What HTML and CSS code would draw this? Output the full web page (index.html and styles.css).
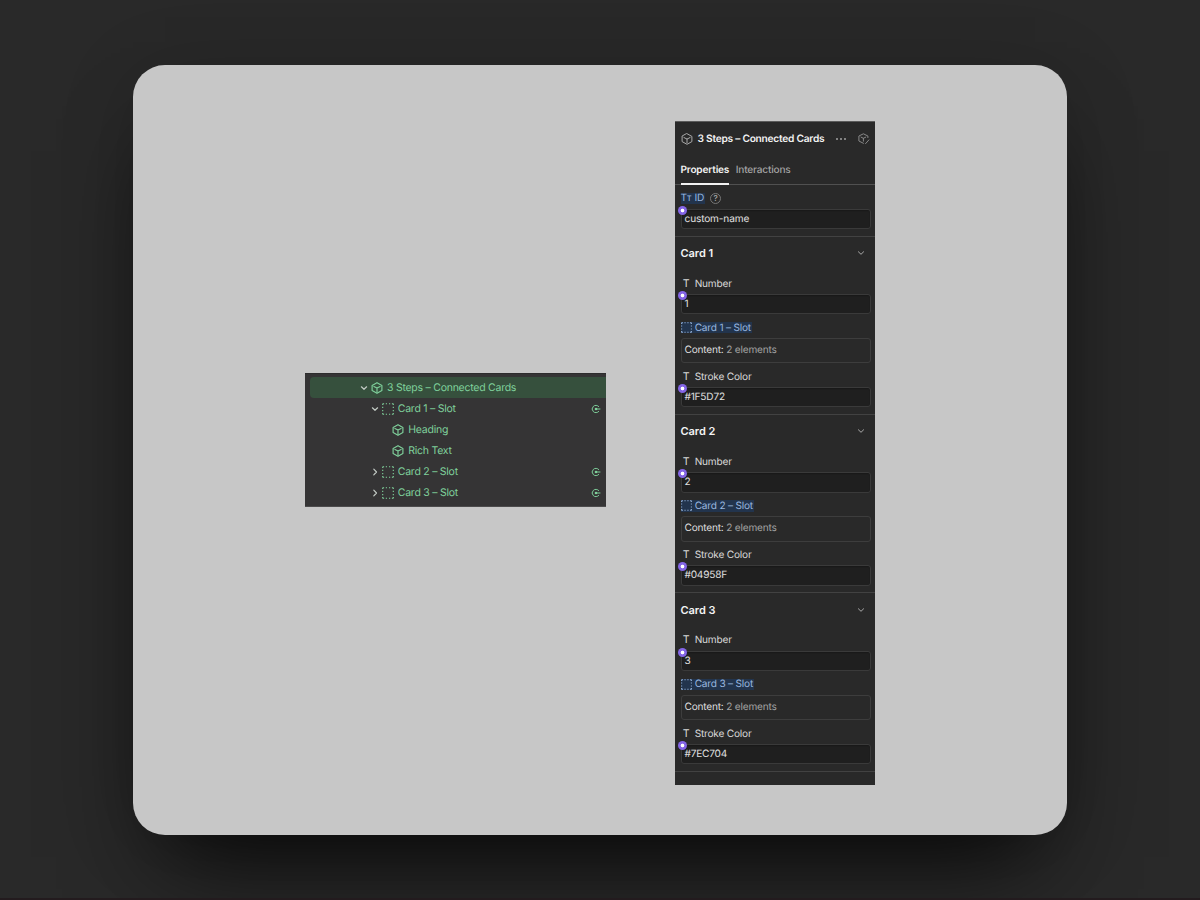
FILE: index.html
```html
<!DOCTYPE html>
<html lang="en">
<head>
<meta charset="utf-8">
<title>3 Steps – Connected Cards</title>
<link rel="stylesheet" href="styles.css">
</head>
<body>
<svg class="defs" aria-hidden="true">
  <symbol id="component" viewBox="0 0 12 12"><path d="M6 .7 10.9 3.4V8.6L6 11.3 1.1 8.6V3.4ZM2.9 4.5 6 6.1l3.1-1.6M6 6.1v3.6"/></symbol>
  <symbol id="edit" viewBox="0 0 12 12"><path d="M9.9 4.6V3L5.4.8.9 3V8l4.5 2.3M3 4.1 5.4 5.3 7.8 4.1M5.4 5.3V8.2M7.6 10.6l3.3-3.7"/></symbol>
  <symbol id="slot" viewBox="0 0 12 12"><path d="M.7 2.1V1.2Q.7.7 1.2.7H2.1M9.9.7h.9q.5 0 .5.5v.9M11.3 9.9v.9q0 .5-.5.5H9.9M2.1 11.3H1.2q-.5 0-.5-.5V9.9M3.8.7h1.2M7 .7h1.2M3.8 11.3h1.2M7 11.3h1.2M.7 3.8v1.2M.7 7v1.2M11.3 3.8v1.2M11.3 7v1.2"/></symbol>
  <symbol id="down" viewBox="0 0 8 8"><path d="M1.4 2.8 4 5.3 6.6 2.8"/></symbol>
  <symbol id="right" viewBox="0 0 8 8"><path d="M2.8 1.2 5.5 4 2.8 6.8"/></symbol>
  <symbol id="target" viewBox="0 0 10 10"><path d="M7.7 2.5A3.7 3.7 0 1 0 7.7 7.5M5 5H9"/><circle cx="5" cy="5" r="1.3" fill="currentColor" stroke="none"/></symbol>
</svg>
<main class="card">
  <section class="tree">
    <div class="row selected"><svg class="chev"><use href="#down"/></svg><svg class="ico"><use href="#component"/></svg><span>3 Steps – Connected Cards</span></div>
    <div class="row level-2"><svg class="chev"><use href="#down"/></svg><svg class="ico slot"><use href="#slot"/></svg><span>Card 1 – Slot</span><svg class="target"><use href="#target"/></svg></div>
    <div class="row level-3"><svg class="ico"><use href="#component"/></svg><span>Heading</span></div>
    <div class="row level-3"><svg class="ico"><use href="#component"/></svg><span>Rich Text</span></div>
    <div class="row level-2"><svg class="chev"><use href="#right"/></svg><svg class="ico slot"><use href="#slot"/></svg><span>Card 2 – Slot</span><svg class="target"><use href="#target"/></svg></div>
    <div class="row level-2"><svg class="chev"><use href="#right"/></svg><svg class="ico slot"><use href="#slot"/></svg><span>Card 3 – Slot</span><svg class="target"><use href="#target"/></svg></div>
  </section>
  <section class="panel">
    <header class="title"><svg class="ico"><use href="#component"/></svg><b>3 Steps – Connected Cards</b><span class="dots"><i></i><i></i><i></i></span><svg class="ico edit"><use href="#edit"/></svg></header>
    <nav class="tabs"><span class="tab active">Properties</span><span class="tab">Interactions</span></nav>
    <div class="id-group">
      <div class="label"><span class="bound id"><span class="tt">T<small>T</small></span>ID</span><span class="help">?</span></div>
      <div class="input"><i class="dot"></i>custom-name</div>
    </div>
    <div class="group">
      <h2>Card 1<svg class="chev"><use href="#down"/></svg></h2>
      <div class="label"><span class="t">T</span>Number</div>
      <div class="input number"><i class="dot"></i>1</div>
      <div class="label slot-label"><span class="bound"><svg class="ico slot"><use href="#slot"/></svg>Card 1 – Slot</span></div>
      <div class="content">Content: <em>2 elements</em></div>
      <div class="label stroke-label"><span class="t">T</span>Stroke Color</div>
      <div class="input"><i class="dot"></i>#1F5D72</div>
    </div>
    <div class="group">
      <h2>Card 2<svg class="chev"><use href="#down"/></svg></h2>
      <div class="label"><span class="t">T</span>Number</div>
      <div class="input number"><i class="dot"></i>2</div>
      <div class="label slot-label"><span class="bound"><svg class="ico slot"><use href="#slot"/></svg>Card 2 – Slot</span></div>
      <div class="content">Content: <em>2 elements</em></div>
      <div class="label stroke-label"><span class="t">T</span>Stroke Color</div>
      <div class="input"><i class="dot"></i>#04958F</div>
    </div>
    <div class="group">
      <h2>Card 3<svg class="chev"><use href="#down"/></svg></h2>
      <div class="label"><span class="t">T</span>Number</div>
      <div class="input number"><i class="dot"></i>3</div>
      <div class="label slot-label"><span class="bound"><svg class="ico slot"><use href="#slot"/></svg>Card 3 – Slot</span></div>
      <div class="content">Content: <em>2 elements</em></div>
      <div class="label stroke-label"><span class="t">T</span>Stroke Color</div>
      <div class="input"><i class="dot"></i>#7EC704</div>
    </div>
    <div class="panel-end"></div>
  </section>
</main>
</body>
</html>
```
FILE: styles.css
```css
* { box-sizing: border-box; }
body {
  margin: 0;
  height: 900px;
  padding: 65px 133px 0;
  overflow: hidden;
  background: #292929;
  border-bottom: 2px solid #231b1e;
  font: 10.1px/16px Inter, sans-serif;
  letter-spacing: -.2px;
  text-rendering: geometricPrecision;
}
.defs { position: absolute; width: 0; height: 0; }
svg { fill: none; stroke: currentColor; stroke-width: 1; stroke-linecap: round; stroke-linejoin: round; flex: none; }
.chev { width: 8px; height: 8px; }
.ico { width: 12px; height: 12px; }
.slot { stroke-width: 1.1; stroke-linecap: butt; }
.card {
  width: 934px;
  height: 769.5px;
  padding: 56px 0 0 172px;
  display: flex;
  align-items: flex-start;
  gap: 69px;
  border-radius: 32px;
  background: #c7c7c7;
  box-shadow: 0 54px 90px -32px rgba(0, 0, 0, .82), 0 10px 80px -5px rgba(0, 0, 0, .18);
}
.tree {
  width: 301px;
  height: 134px;
  margin-top: 252px;
  padding: 3px 0 0 5px;
  background: #353435;
  border-top: 1px solid #2d2c2d;
  border-bottom: 1px solid #4c4b4c;
  color: #7fd09b;
}
.row { display: flex; align-items: center; height: 21.1px; padding-left: 50.2px; font-size: 10.5px; letter-spacing: -.25px; }
.row span { white-space: nowrap; }
.row .chev { color: #c3cbc5; margin-right: 2.5px; stroke-width: 1.2; }
.row .ico { margin-right: 4.3px; }
.row .ico:not(.slot) { stroke-width: 1.15; }
.selected { background: #36503d; border-radius: 4px 0 0 4px; }
.level-2 { padding-left: 61px; }
.level-3 { padding-left: 82px; }
.target { width: 10px; height: 10px; margin-left: auto; margin-right: 5px; }
.panel {
  width: 200px;
  height: 664.5px;
  margin-top: -.5px;
  background: #292929;
  border-top: 1px solid #5b5b5b;
  color: #dedede;
  display: flex;
  flex-direction: column;
}
.title { height: 34px; display: flex; align-items: center; padding: 1px 5px 0 6px; color: #aaa; }
.title b { margin-left: 4.5px; width: 127px; font-size: 10.2px; font-weight: 600; letter-spacing: -.25px; color: #f2f2f2; white-space: nowrap; }
.dots { display: flex; gap: 2px; margin-left: 11.5px; }
.dots i { width: 2px; height: 2px; border-radius: 50%; background: #a0a0a0; }
.edit { margin-left: auto; color: #888; }
.tabs { height: 29px; display: flex; gap: 6.5px; padding-left: 5.5px; border-bottom: 1px solid #505050; }
.tab { height: 29px; padding-top: 6.4px; color: #a4a4a4; font-size: 10.1px; font-weight: 500; letter-spacing: -.19px; }
.active { color: #f2f2f2; font-weight: 600; border-bottom: 2px solid #f2f2f2; }
.id-group { height: 51.2px; padding: 5.8px 4.5px 0 5.5px; }
.id-group .input { margin-top: 2.4px; letter-spacing: -.14px; }
.label { height: 16px; display: flex; align-items: center; color: #d8d8d8; white-space: nowrap; }
.t { width: 11px; margin-right: 3.2px; text-align: center; font-size: 10.6px; }
.bound { display: flex; align-items: center; height: 11.5px; background: #22344d; color: #98b6df; padding-right: 1px; }
.bound .ico { width: 11px; height: 11px; margin-right: 3.2px; }
.tt { width: 14px; }
.tt small { font-size: 7.5px; font-weight: 500; }
.help { width: 11px; height: 11px; margin-left: 5px; border: 1px solid #777; border-radius: 50%; color: #aaa; font-size: 8px; font-weight: 500; line-height: 9px; text-align: center; letter-spacing: 0; }
.input {
  position: relative;
  height: 20.3px;
  margin-top: 2.2px;
  padding-left: 3px;
  line-height: 19px;
  background: #1f1f1f;
  border: 1px solid #3a3a3a;
  border-radius: 3px;
  box-shadow: inset 0 1px 1px #191919;
  color: #e0e0e0;
}
.dot { position: absolute; left: -4px; top: -4px; width: 9px; height: 9px; border-radius: 50%; background: radial-gradient(circle, #fff 1.5px, #8465e6 2.2px); }
.group { height: 178.3px; padding: 0 4.5px 0 5.5px; border-top: 1px solid #424242; }
h2 { display: flex; align-items: center; justify-content: space-between; height: 33px; margin: 0 0 6.1px; padding-right: 6px; font-size: 11px; font-weight: 600; letter-spacing: -.05px; color: #f4f4f4; }
h2 .chev { color: #aaa; }
.slot-label { margin-top: 5.4px; }
.content { height: 25.3px; margin-top: 2.4px; padding-left: 3px; line-height: 23.6px; border: 1px solid #3d3d3d; border-radius: 3px; white-space: nowrap; }
.content em { font-style: normal; color: #a2a2a2; }
.stroke-label { margin-top: 5.6px; }
.panel-end { border-top: 1px solid #424242; }
```
